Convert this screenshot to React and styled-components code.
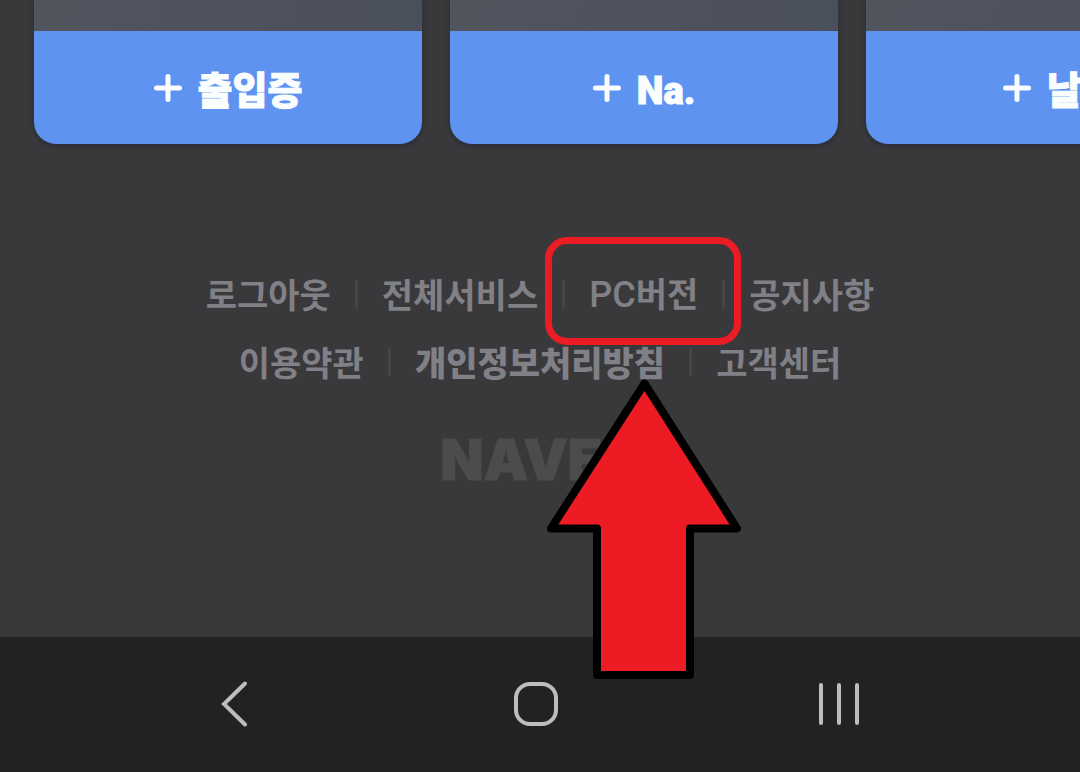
import styled, { createGlobalStyle, css } from 'styled-components';

const GlobalStyle = createGlobalStyle`
  * {
    box-sizing: border-box;
  }
  body {
    margin: 0;
    background-color: #39393b;
    font-family: 'Noto Sans CJK KR', sans-serif;
  }
`;

const Page = styled.div`
  display: flex;
  flex-direction: column;
  min-height: 100vh;
  overflow: hidden;
`;

const Cards = styled.section`
  display: flex;
  gap: 28px;
  padding-left: 34px;
`;

const Card = styled.article`
  flex: 0 0 388px;
  overflow: hidden;
  border-radius: 0 0 22px 22px;
  box-shadow: 0 2px 4px rgba(20, 30, 55, 0.5);
`;

const CardBody = styled.div`
  height: 31px;
  background: linear-gradient(100deg, #51555e, #4a4f5c);
`;

const CardButton = styled.button`
  display: flex;
  justify-content: center;
  align-items: center;
  gap: 16px;
  width: 100%;
  height: 113px;
  padding: 0;
  border: 0;
  background-color: #5e93f1;
  color: #fbfeff;
  font-family: Roboto, 'Noto Sans CJK KR', sans-serif;
  font-size: 38px;
  font-weight: 900;
  line-height: 56px;
  white-space: nowrap;
`;

const CardLabel = styled.span`
  padding-top: 6px;
  -webkit-text-stroke: 1px currentColor;
`;

const Footer = styled.footer`
  display: flex;
  flex: 1;
  flex-direction: column;
  align-items: center;
  padding: 116px 20px 120px;
`;

const LinkRow = styled.ul`
  display: flex;
  margin: 0;
  padding: 0;
  list-style: none;
`;

const LinkItem = styled.li`
  position: relative;
  display: flex;
  align-items: center;
  height: 68px;

  & + &::before {
    content: '';
    width: 3px;
    height: 28px;
    margin: 0 24px;
    background-color: #454548;
  }
`;

const FooterLink = styled.a`
  color: #808086;
  font-size: 34px;
  font-weight: ${(props) => (props.$strong ? 900 : 700)};
  line-height: 68px;
  text-decoration: none;
  white-space: nowrap;
`;

const Latin = styled.span`
  font-family: Roboto, sans-serif;
  font-size: 36px;
  font-weight: 500;
`;

const Logo = styled.div`
  margin-top: 32px;
  color: #4c4c4e;
  font-family: Inter, sans-serif;
  font-size: 56px;
  font-weight: 900;
  line-height: 64px;
  -webkit-text-stroke: 1px currentColor;
`;

const marker = css`
  position: absolute;
  right: -43px;
  z-index: 1;
  pointer-events: none;
`;

const Ring = styled.span`
  ${marker}
  top: -23px;
  width: 196px;
  height: 108px;
  border: 7px solid #ec1c24;
  border-radius: 22px;
`;

const Arrow = styled.svg`
  ${marker}
  top: 118px;
`;

const NavBar = styled.nav`
  display: flex;
  height: 135px;
  padding: 0 90px 2px 82px;
  background-color: #222224;
`;

const NavButton = styled.button`
  display: flex;
  flex: 1;
  justify-content: center;
  align-items: center;
  padding: 0;
  border: 0;
  background: none;
  color: #bdbdbf;
`;

const cards = ['출입증', 'Na.', '날씨'];

const PlusIcon = () => (
  <svg width="28" height="28" viewBox="0 0 28 28" aria-hidden="true">
    <path
      d="M14 2.5v23M2.5 14h23"
      stroke="currentColor"
      strokeWidth="5"
      strokeLinecap="round"
    />
  </svg>
);

const NavIcon = ({ children }) => (
  <svg
    width="48"
    height="48"
    viewBox="0 0 48 48"
    fill="none"
    stroke="currentColor"
    strokeWidth="4"
    strokeLinecap="round"
    aria-hidden="true"
  >
    {children}
  </svg>
);

const App = () => {
  return (
    <>
      <GlobalStyle />
      <Page>
        <Cards>
          {cards.map((name) => (
            <Card key={name}>
              <CardBody />
              <CardButton type="button">
                <PlusIcon />
                <CardLabel>{name}</CardLabel>
              </CardButton>
            </Card>
          ))}
        </Cards>
        <Footer>
          <LinkRow>
            <LinkItem>
              <FooterLink href="#logout">로그아웃</FooterLink>
            </LinkItem>
            <LinkItem>
              <FooterLink href="#services">전체서비스</FooterLink>
            </LinkItem>
            <LinkItem>
              <FooterLink href="#pc">
                <Latin>PC</Latin>버전
              </FooterLink>
              <Ring />
              <Arrow width="196" height="302" viewBox="545 378 196 302">
                <path
                  d="M644.5 383.5L737 528.5H690V675H597V528.5H551Z"
                  fill="#ed1c24"
                  stroke="#000"
                  strokeWidth="8"
                  strokeLinejoin="round"
                />
              </Arrow>
            </LinkItem>
            <LinkItem>
              <FooterLink href="#notice">공지사항</FooterLink>
            </LinkItem>
          </LinkRow>
          <LinkRow>
            <LinkItem>
              <FooterLink href="#terms">이용약관</FooterLink>
            </LinkItem>
            <LinkItem>
              <FooterLink href="#privacy" $strong>
                개인정보처리방침
              </FooterLink>
            </LinkItem>
            <LinkItem>
              <FooterLink href="#help">고객센터</FooterLink>
            </LinkItem>
          </LinkRow>
          <Logo>NAVER</Logo>
        </Footer>
        <NavBar>
          <NavButton type="button" aria-label="뒤로">
            <NavIcon>
              <path d="M36 3.5L15 24L36 44.5" />
            </NavIcon>
          </NavButton>
          <NavButton type="button" aria-label="홈">
            <NavIcon>
              <rect x="4" y="4" width="40" height="40" rx="14" />
            </NavIcon>
          </NavButton>
          <NavButton type="button" aria-label="최근 앱">
            <NavIcon>
              <path d="M6 5v38M24 5v38M42 5v38" />
            </NavIcon>
          </NavButton>
        </NavBar>
      </Page>
    </>
  );
};

export default App;
